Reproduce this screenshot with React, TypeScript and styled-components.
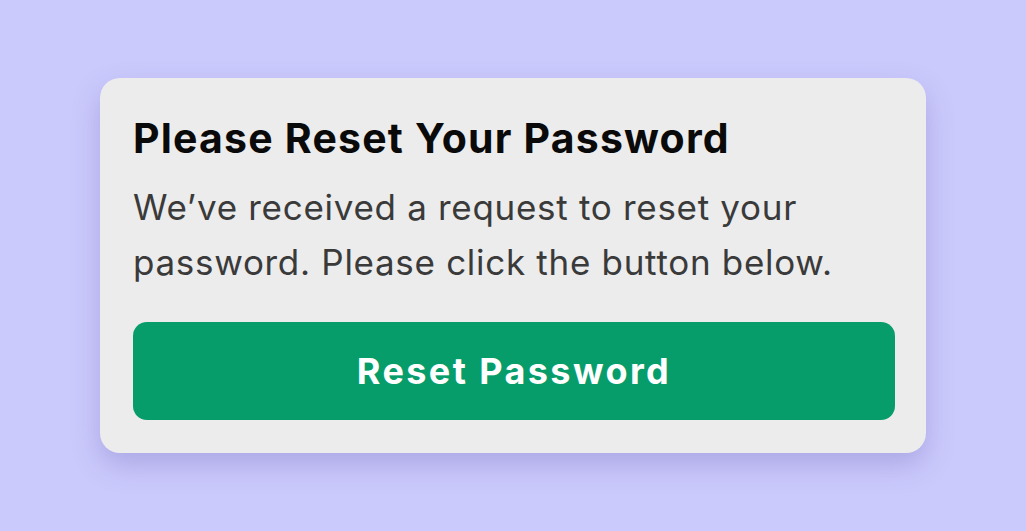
import React from "react";
import styled, { createGlobalStyle } from "styled-components";

const Global = createGlobalStyle`
  html, body { margin: 0; padding: 0; }
  body {
    background: #cbcafc;
    font-family: Inter, "Noto Sans", sans-serif;
    -webkit-font-smoothing: antialiased;
  }
`;

const Page = styled.div`
  width: 1026px;
  height: 531px;
  display: flex;
  align-items: center;
  justify-content: center;
`;

const Card = styled.div`
  box-sizing: border-box;
  width: 826px;
  padding: 36px 31px 33px 33px;
  background: #ececec;
  border-radius: 20px;
  box-shadow: 0 12px 28px rgba(90, 80, 170, 0.28);
  display: flex;
  flex-direction: column;
`;

const Title = styled.h1`
  margin: 0;
  font-size: 41px;
  line-height: 48px;
  font-weight: 700;
  letter-spacing: 1.2px;
  color: #0a0a0a;
`;

const Body = styled.p`
  margin: 18px 0 32px;
  font-size: 35px;
  line-height: 55px;
  font-weight: 400;
  letter-spacing: 0.7px;
  color: #3a3a3a;
`;

const Button = styled.button`
  height: 98px;
  border: none;
  border-radius: 14px;
  background: #069d6b;
  color: #ffffff;
  font-family: Inter, "Noto Sans", sans-serif;
  font-size: 36px;
  font-weight: 700;
  letter-spacing: 2.4px;
  cursor: pointer;
`;

export default function App() {
  return (
    <>
      <Global />
      <Page>
        <Card>
          <Title>Please Reset Your Password</Title>
          <Body>
            We’ve received a request to reset your password. Please click the
            button below.
          </Body>
          <Button>Reset Password</Button>
        </Card>
      </Page>
    </>
  );
}
